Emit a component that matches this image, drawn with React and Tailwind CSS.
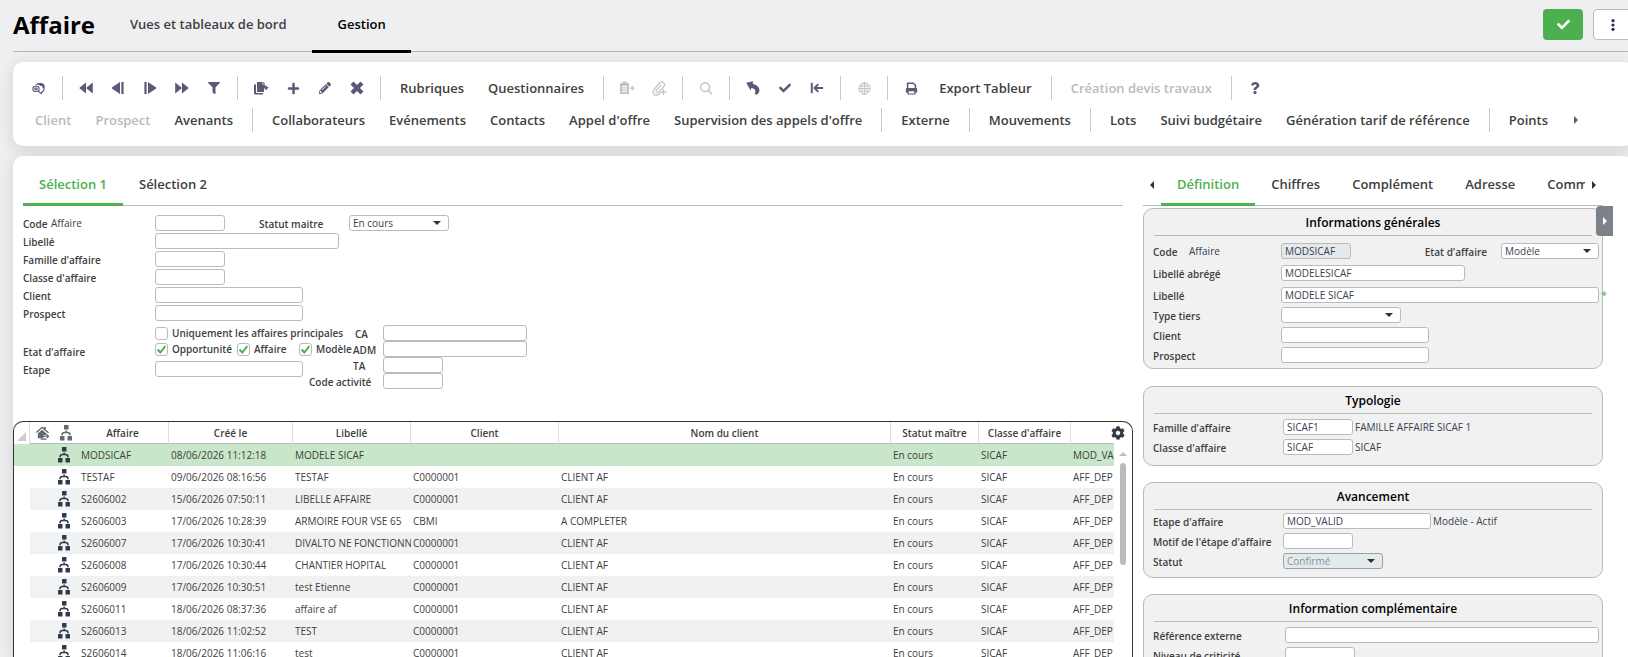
import { FaFilter, FaPlus, FaPencilAlt, FaQuestion, FaCheck, FaCog } from "react-icons/fa";

const Svg = ({ children, className = "w-4 h-4", viewBox = "0 0 16 16" }) => (
    <svg viewBox={viewBox} className={className} fill="currentColor" aria-hidden="true">{children}</svg>
);

const stroke = { fill: "none", stroke: "currentColor", strokeLinecap: "round", strokeLinejoin: "round" };

const icons = {
    globeSearch: (
        <Svg className="w-[14px] h-[14px]">
            <g {...stroke} strokeWidth="1.3">
                <path d="M5 4.200A5.200 5.200 0 1 1 12 12.400" />
                <path d="M7 3.500c1.500 0 1.500 1.500 3 1.500" />
                <rect x="1" y="6" width="7" height="6" rx="2.500" />
                <path d="M3.300 8h2.400v2H3.300zM7.800 12l2.600 2.400 1.200-2" />
            </g>
            <path d="M9.500 2c3 .2 5 2 5.200 5l-2.500 1-.8-2.500-2.400-.5z" />
        </Svg>
    ),
    first: <Svg><path d="M8 2.500v11L1.200 8zM14.800 2.500v11L8 8z" /></Svg>,
    prev: <Svg><path d="M10 2v12L2.200 8.800a1 1 0 0 1 0-1.600zM11.400 2h2.200v12h-2.200z" /></Svg>,
    next: <Svg><path d="M6 2v12l7.800-5.200a1 1 0 0 0 0-1.600zM2.400 2h2.200v12H2.400z" /></Svg>,
    last: <Svg><path d="M8 2.500v11L14.800 8zM1.200 2.500v11L8 8z" /></Svg>,
    filter: <FaFilter className="w-3 h-3" />,
    copy: (
        <Svg>
            <path d="M4 2h5.500v2.500H12V7h-1v5H4z" />
            <path d="M1 4.500h2v8.500h7v1.500H2.200A1.200 1.200 0 0 1 1 13.300zM10.200 1.800 12.200 4h-2z" />
            <path d="M12.300 5.600h1.500v1.500h1.600v1.500h-1.600v1.500h-1.500V8.600h-1.300V7.100h1.300z" />
        </Svg>
    ),
    plus: <FaPlus className="w-[13px] h-[13px]" />,
    pencil: <FaPencilAlt className="w-3 h-3" />,
    times: <Svg className="w-[14px] h-[14px]"><path {...stroke} strokeWidth="4.800" strokeLinecap="butt" d="M2.300 2.300l11.400 11.400M13.700 2.300 2.300 13.700" /></Svg>,
    clipboard: (
        <Svg>
            <path fillRule="evenodd" d="M1 3h2.500V1.500h4V3H10v11H1zM3 6v1.200h5V6zM3 8.400v1.200h5V8.400zM3 10.800V12h5v-1.200z" />
            <path d="M12.600 5.500h1.200v2h2v1.200h-2v2h-1.200v-2h-2V7.500h2z" />
        </Svg>
    ),
    clip: (
        <Svg>
            <path {...stroke} strokeWidth="1.300" d="M9 13.500l-1.500 1A3.400 3.400 0 0 1 2.700 9.800l6.200-7a2.700 2.700 0 0 1 4 3.600l-5.400 6a1.500 1.500 0 0 1-2.200-2l4.600-5M12.500 9.500v5M10 12h5" />
        </Svg>
    ),
    search: <Svg className="w-[14px] h-[14px]"><g {...stroke} strokeWidth="1.700"><circle cx="7" cy="7" r="5" /><path d="M11 11l3.500 3.500" /></g></Svg>,
    undo: <Svg><path d="M1.200 2.800 8.200 1.200 7.600 3.800c3.600 1 6.800 3 6.800 6.400 0 1.800-.8 3.200-2.800 4.600l-2-1c1.800-2.600.6-5.200-3.200-6l-.8 2.600z" /></Svg>,
    check: <FaCheck className="w-3 h-3" />,
    exit: <Svg className="w-[14px] h-[14px]"><path {...stroke} strokeLinecap="butt" strokeLinejoin="miter" strokeWidth="2.200" d="M2 2v12M15 8H5.500M9.500 3.500 5 8l4.500 4.500" /></Svg>,
    globe: (
        <Svg className="w-[13px] h-[13px]">
            <g {...stroke} strokeWidth="1.200">
                <circle cx="8" cy="8" r="7" /><ellipse cx="8" cy="8" rx="3.500" ry="7" />
                <path d="M1 8h14M8 1v14M2 4.800h12M2 11.200h12" />
            </g>
        </Svg>
    ),
    print: (
        <Svg className="w-[13px] h-[13px]">
            <path {...stroke} strokeWidth="1.900" d="M3.200 8V1.500h7l2.600 2.500v4" />
            <path fillRule="evenodd" d="M1 9a1.500 1.500 0 0 1 1.500-1.500h11A1.500 1.500 0 0 1 15 9v4h-2v2.500H3V13H1zM4.600 11.500V14h6.800v-2.500z" />
        </Svg>
    ),
    question: <FaQuestion className="w-3 h-3" />,
};

const SitemapIcon = ({ className }) => (
    <Svg className={`w-3 h-4 ${className}`} viewBox="0 0 12 16">
        <rect x="4" y="0" width="4.500" height="4.500" rx=".5" />
        <path {...stroke} strokeWidth="1.500" d="M2 9.800c0-2 .8-2.300 2.500-2.300h3c1.700 0 2.500.3 2.500 2.300" />
        <path d="M5.400 5.500h1.500V8H5.400z" />
        <rect x="0" y="11" width="4.500" height="4.500" rx=".5" />
        <rect x="7.500" y="11" width="4.500" height="4.500" rx=".5" />
    </Svg>
);

const HomeIcon = () => (
    <Svg className="w-[15px] h-[15px] text-[#5f6a75]">
        <path d="M1 7.500 7.500 1.500l2 1.700V2h2v3l3.500 2.700-1 1.100L7.500 3.500 2 8.600zM7.500 5l5 4.200V11H9v3H3V9z" />
        <path {...stroke} strokeWidth="1.200" d="M8.500 12h6M13 10.500l1.500 1.500L13 13.500M12 15H6.500" />
    </Svg>
);

const Sep = () => <span className="w-px h-6 mx-[7px] bg-[#c8c8d0] shrink-0" />;

const ToolIcon = ({ icon, label, disabled }) => (
    <button
        type="button"
        aria-label={label}
        disabled={disabled}
        className="w-8 h-8 flex items-center justify-center text-[#5b5878] disabled:text-[#c3c3cc] shrink-0">
        {icons[icon]}
    </button>
);

const ToolText = ({ children, disabled }) => (
    <button
        type="button"
        disabled={disabled}
        className="h-8 pt-0.5 px-3 text-[13px] font-semibold text-[#404040] disabled:text-[#bababa] whitespace-nowrap shrink-0">
        {children}
    </button>
);

const firstRow = [
    { icon: "globeSearch", label: "Recherche" }, "|",
    { icon: "first", label: "Premier" }, { icon: "prev", label: "Précédent" }, { icon: "next", label: "Suivant" },
    { icon: "last", label: "Dernier" }, { icon: "filter", label: "Filtrer" }, "|",
    { icon: "copy", label: "Dupliquer" }, { icon: "plus", label: "Ajouter" }, { icon: "pencil", label: "Modifier" },
    { icon: "times", label: "Supprimer" }, "|",
    { text: "Rubriques" }, { text: "Questionnaires" }, "|",
    { icon: "clipboard", label: "Coller", disabled: true }, { icon: "clip", label: "Joindre", disabled: true }, "|",
    { icon: "search", label: "Zoom", disabled: true }, "|",
    { icon: "undo", label: "Annuler" }, { icon: "check", label: "Valider" }, { icon: "exit", label: "Quitter" }, "|",
    { icon: "globe", label: "Web", disabled: true }, "|",
    { icon: "print", label: "Imprimer" }, { text: "Export Tableur" }, "|",
    { text: "Création devis travaux", disabled: true }, "|",
    { icon: "question", label: "Aide" },
];

const secondRow = [
    { text: "Client", disabled: true }, { text: "Prospect", disabled: true }, { text: "Avenants" }, "|",
    { text: "Collaborateurs" }, { text: "Evénements" }, { text: "Contacts" }, { text: "Appel d'offre" },
    { text: "Supervision des appels d'offre" }, "|",
    { text: "Externe" }, "|", { text: "Mouvements" }, "|",
    { text: "Lots" }, { text: "Suivi budgétaire" }, { text: "Génération tarif de référence" }, "|",
    { text: "Points" },
];

const ToolRow = ({ items, children }) => (
    <div className="flex items-center h-8">
        {items.map((item, index) => {
            if (item === "|") return <Sep key={index} />;
            if (item.icon) return <ToolIcon key={index} {...item} />;
            return <ToolText key={index} disabled={item.disabled}>{item.text}</ToolText>;
        })}
        {children}
    </div>
);

const ArrowRight = () => <Svg className="w-1 h-2" viewBox="0 0 4 8"><path d="M0 0l4 4-4 4z" /></Svg>;
const ArrowLeft = () => <Svg className="w-1 h-2" viewBox="0 0 4 8"><path d="M4 0 0 4l4 4z" /></Svg>;

const Tab = ({ active, children }) => (
    <button
        type="button"
        className={`h-[42px] pt-0.5 px-4 text-[13px] font-semibold whitespace-nowrap shrink-0 border-b-3 ${active ? "border-[#4caf50] text-[#4caf50]" : "border-transparent text-[#404040]"}`}>
        {children}
    </button>
);

const Label = ({ htmlFor, className = "", children }) => (
    <label htmlFor={htmlFor} className={`pt-px text-[10px] leading-4 font-semibold text-[#404040] whitespace-nowrap shrink-0 ${className}`}>
        {children}
    </label>
);

const Input = ({ id, className = "", value = "", disabled }) => (
    <input
        id={id}
        type="text"
        defaultValue={value}
        disabled={disabled}
        className={`h-4 px-[3px] text-[10px] leading-[14px] text-[#36424f] bg-white disabled:bg-[#e4e9ec] border border-[#bbb] rounded-[3px] ${className}`}
    />
);

const Select = ({ id, className = "", value, disabled }) => (
    <span className={`relative flex shrink-0 ${className}`}>
        <select
            id={id}
            defaultValue={value}
            disabled={disabled}
            className="appearance-none w-full h-4 px-[3px] text-[10px] leading-[14px] text-[#36424f] bg-white disabled:bg-[#e4e9ec] disabled:text-[#8b9299] disabled:opacity-100 border border-[#bbb] disabled:border-[#98a2ab] rounded-[3px]">
            <option>{value}</option>
        </select>
        <svg viewBox="0 0 8 4" className="absolute right-2 top-1.5 w-2 h-1 fill-[#333] pointer-events-none"><path d="M0 0h8L4 4z" /></svg>
    </span>
);

const Hint = ({ children, className = "" }) => (
    <span className={`text-[10px] leading-4 text-[#36424f] whitespace-nowrap ${className}`}>{children}</span>
);

const Check = ({ id, label, checked, className = "" }) => (
    <span className={`flex items-center h-4 shrink-0 ${className}`}>
        <span className="relative flex w-[13px] h-[13px]">
            <input
                id={id}
                type="checkbox"
                defaultChecked={checked}
                className="peer appearance-none w-[13px] h-[13px] bg-white border border-[#bbb] rounded-[3px]"
            />
            <svg viewBox="0 0 13 13" className="absolute inset-0 hidden peer-checked:block pointer-events-none">
                <path d="M2.500 6.500 5.300 9.500 10.300 3.200" fill="none" stroke="#4caf50" strokeWidth="2" />
            </svg>
        </span>
        <label htmlFor={id} className="ml-1 text-[10px] leading-4 font-semibold text-[#404040] whitespace-nowrap">{label}</label>
    </span>
);

const filters = [
    { id: "f-libelle", label: "Libellé", width: "w-[184px]" },
    { id: "f-famille", label: "Famille d'affaire", width: "w-[70px]" },
    { id: "f-classe", label: "Classe d'affaire", width: "w-[70px]" },
    { id: "f-client", label: "Client", width: "w-[148px]" },
    { id: "f-prospect", label: "Prospect", width: "w-[148px]" },
];

const people = [
    { id: "f-ca", label: "CA", width: "w-[144px]", indent: "pl-[46px]" },
    { id: "f-adm", label: "ADM", width: "w-[144px]", indent: "pl-11" },
    { id: "f-ta", label: "TA", width: "w-[60px]", indent: "pl-11" },
    { id: "f-activite", label: "Code activité", width: "w-[60px]", indent: "" },
];

const FilterForm = () => (
    <form className="px-[10px] pt-[9px] h-[215px] shrink-0">
        <div className="flex h-[18px]">
            <Label htmlFor="f-code" className="w-7">Code</Label>
            <Hint className="w-[104px]">Affaire</Hint>
            <Input id="f-code" className="w-[70px]" />
            <Label htmlFor="f-statut" className="w-[90px] ml-[34px]">Statut maitre</Label>
            <Select id="f-statut" className="w-[100px]" value="En cours" />
        </div>
        {filters.map((field) => (
            <div key={field.id} className="flex h-[18px]">
                <Label htmlFor={field.id} className="w-[132px]">{field.label}</Label>
                <Input id={field.id} className={field.width} />
            </div>
        ))}
        <div className="flex pt-0.5">
            <div className="w-[132px] pt-[18px] flex flex-col gap-px shrink-0">
                <Label>Etat d'affaire</Label>
                <Label htmlFor="f-etape">Etape</Label>
            </div>
            <div className="w-[154px] shrink-0">
                <Check id="c-principales" label="Uniquement les affaires principales" />
                <div className="flex">
                    <Check id="c-opportunite" label="Opportunité" checked className="w-[82px]" />
                    <Check id="c-affaire" label="Affaire" checked className="w-[62px]" />
                    <Check id="c-modele" label="Modèle" checked />
                </div>
                <Input id="f-etape" className="block w-[148px] mt-1" />
            </div>
            <div>
                {people.map((field) => (
                    <div key={field.id} className="flex h-4">
                        <Label htmlFor={field.id} className={`w-[74px] ${field.indent}`}>{field.label}</Label>
                        <Input id={field.id} className={field.width} />
                    </div>
                ))}
            </div>
        </div>
    </form>
);

const rows = [
    ["MODSICAF", "08/06/2026 11:12:18", "MODELE SICAF", "", "", "En cours", "SICAF", "MOD_VALID"],
    ["TESTAF", "09/06/2026 08:16:56", "TESTAF", "C0000001", "CLIENT AF", "En cours", "SICAF", "AFF_DEP"],
    ["S2606002", "15/06/2026 07:50:11", "LIBELLE AFFAIRE", "C0000001", "CLIENT AF", "En cours", "SICAF", "AFF_DEP"],
    ["S2606003", "17/06/2026 10:28:39", "ARMOIRE FOUR VSE 65", "CBMI", "A COMPLETER", "En cours", "SICAF", "AFF_DEP"],
    ["S2606007", "17/06/2026 10:30:41", "DIVALTO NE FONCTIONNE", "C0000001", "CLIENT AF", "En cours", "SICAF", "AFF_DEP"],
    ["S2606008", "17/06/2026 10:30:44", "CHANTIER HOPITAL", "C0000001", "CLIENT AF", "En cours", "SICAF", "AFF_DEP"],
    ["S2606009", "17/06/2026 10:30:51", "test Etienne", "C0000001", "CLIENT AF", "En cours", "SICAF", "AFF_DEP"],
    ["S2606011", "18/06/2026 08:37:36", "affaire af", "C0000001", "CLIENT AF", "En cours", "SICAF", "AFF_DEP"],
    ["S2606013", "18/06/2026 11:02:52", "TEST", "C0000001", "CLIENT AF", "En cours", "SICAF", "AFF_DEP"],
    ["S2606014", "18/06/2026 11:06:16", "test", "C0000001", "CLIENT AF", "En cours", "SICAF", "AFF_DEP"],
];

const headers = ["Affaire", "Créé le", "Libellé", "Client", "Nom du client", "Statut maître", "Classe d'affaire", ""];

const AffaireTable = () => (
    <div className="flex flex-1 min-h-0 overflow-hidden border border-b-0 border-[#333] rounded-t-[10px]">
        <div className="flex-1 min-w-0">
            <table className="w-full table-fixed border-separate border-spacing-0">
                <colgroup>
                    <col className="w-4" />
                    <col className="w-6" />
                    <col className="w-[23px]" />
                    <col className="w-[92px]" />
                    <col className="w-[124px]" />
                    <col className="w-[118px]" />
                    <col className="w-[148px]" />
                    <col />
                    <col className="w-[88px]" />
                    <col className="w-[92px]" />
                    <col className="w-[43px]" />
                </colgroup>
                <thead>
                    <tr className="h-[22px]">
                        <th className="p-0 align-bottom border-r border-[#ddd]">
                            <Svg className="w-[9px] h-[9px] ml-[3px] mb-[3px] text-[#ccc]" viewBox="0 0 9 9"><path d="M9 0v9H0z" /></Svg>
                        </th>
                        <th className="p-0 border-b border-[#bbb]"><span className="flex justify-center"><HomeIcon /></span></th>
                        <th className="p-0 border-b border-[#bbb]"><span className="flex justify-center"><SitemapIcon className="text-[#5f6a75]" /></span></th>
                        {headers.map((header, index) => (
                            <th key={index} className="p-0 text-[10px] leading-4 font-semibold text-[#404040] whitespace-nowrap border-b border-b-[#bbb] border-r border-r-[#ddd] last:border-r-0">
                                {header}
                            </th>
                        ))}
                    </tr>
                </thead>
                <tbody>
                    {rows.map((row, index) => {
                        const bg = index === 0 ? "bg-[#c8e6c9]" : index % 2 === 0 ? "bg-[#f1f1f1]" : "bg-white";
                        const iconBg = index !== 0 && index % 2 === 0 ? "bg-[#f0f2f4]" : bg;
                        return (
                            <tr key={row[0]} className="h-[22px]">
                                <td className={`p-0 ${index === 0 ? bg : ""}`} />
                                <td className={`p-0 ${iconBg}`} />
                                <td className={`p-0 ${iconBg}`}><SitemapIcon className="block ml-1 text-[#2f3b48]" /></td>
                                {row.map((cell, cellIndex) => (
                                    <td key={cellIndex} className={`py-0 pr-0 text-[10px] leading-4 text-[#404040] whitespace-nowrap overflow-hidden ${cellIndex === 0 ? "pl-1" : "pl-0.5"} ${bg}`}>
                                        {cell}
                                    </td>
                                ))}
                            </tr>
                        );
                    })}
                </tbody>
            </table>
        </div>
        <div className="w-[18px] shrink-0 flex flex-col items-center">
            <button type="button" aria-label="Paramètres" className="-ml-2.5 mt-1 text-[#2f3b48]"><FaCog className="w-[14px] h-[14px]" /></button>
            <svg viewBox="0 0 8 4" className="w-2 h-1 mt-3 fill-[#bbb]"><path d="M4 0l4 4H0z" /></svg>
            <div className="w-1.5 h-[102px] mt-[7px] rounded-full bg-[#bbb]" />
        </div>
    </div>
);

const Panel = ({ title, className = "", children }) => (
    <fieldset className={`px-[9px] border border-[#bbb] rounded-[10px] bg-[#f1f1f1] shrink-0 ${className}`}>
        <h2 className="h-[27px] mx-px text-center text-xs leading-[27px] font-semibold text-black border-b border-[#bbb]">{title}</h2>
        {children}
    </fieldset>
);

const DetailPane = () => (
    <section className="relative w-[460px] mr-[30px] shrink-0 flex flex-col">
        <div className="flex items-end h-[50px] border-b border-[#bbb] shrink-0">
            <button type="button" aria-label="Onglets précédents" className="w-[18px] h-10 flex items-center justify-center text-[#333]"><ArrowLeft /></button>
            <div className="flex flex-1 min-w-0 overflow-hidden -mb-px">
                <Tab active>Définition</Tab>
                <Tab>Chiffres</Tab>
                <Tab>Complément</Tab>
                <Tab>Adresse</Tab>
                <Tab>Commentaire</Tab>
            </div>
            <button type="button" aria-label="Onglets suivants" className="w-[18px] h-10 flex items-center justify-center text-[#333]"><ArrowRight /></button>
        </div>
        <Panel title="Informations générales" className="mt-0.5 h-[161px]">
            <div className="flex h-[22px] mt-[7px]">
                <Label htmlFor="d-code" className="w-9">Code</Label>
                <Hint className="w-[92px]">Affaire</Hint>
                <Input id="d-code" className="w-[70px]" value="MODSICAF" disabled />
                <Label htmlFor="d-etat" className="ml-auto mr-3.5">Etat d'affaire</Label>
                <Select id="d-etat" className="w-[98px] -mr-1.5" value="Modèle" />
            </div>
            <div className="flex h-[22px]">
                <Label htmlFor="d-abrege" className="w-32">Libellé abrégé</Label>
                <Input id="d-abrege" className="w-[184px]" value="MODELESICAF" />
            </div>
            <div className="relative flex h-5">
                <Label htmlFor="d-libelle" className="w-32">Libellé</Label>
                <Input id="d-libelle" className="flex-1 -mr-1.5" value="MODELE SICAF" />
                <span className="absolute -right-[14px] top-0 text-[11px] leading-4 text-[#4caf50]">*</span>
            </div>
            <div className="flex h-5">
                <Label htmlFor="d-tiers" className="w-32">Type tiers</Label>
                <Select id="d-tiers" className="w-[120px]" value="" />
            </div>
            <div className="flex h-5">
                <Label htmlFor="d-client" className="w-32">Client</Label>
                <Input id="d-client" className="w-[148px]" />
            </div>
            <div className="flex h-5">
                <Label htmlFor="d-prospect" className="w-32">Prospect</Label>
                <Input id="d-prospect" className="w-[148px]" />
            </div>
        </Panel>
        <Panel title="Typologie" className="mt-[17px] h-20">
            <div className="flex h-5 mt-[5px]">
                <Label htmlFor="d-famille" className="w-[130px]">Famille d'affaire</Label>
                <Input id="d-famille" className="w-[70px]" value="SICAF1" />
                <Hint className="ml-0.5">FAMILLE AFFAIRE SICAF 1</Hint>
            </div>
            <div className="flex h-5">
                <Label htmlFor="d-classe" className="w-[130px]">Classe d'affaire</Label>
                <Input id="d-classe" className="w-[70px]" value="SICAF" />
                <Hint className="ml-0.5">SICAF</Hint>
            </div>
        </Panel>
        <Panel title="Avancement" className="mt-4 h-24">
            <div className="flex h-5 mt-[3px]">
                <Label htmlFor="d-etape" className="w-[130px]">Etape d'affaire</Label>
                <Input id="d-etape" className="w-[148px]" value="MOD_VALID" />
                <Hint className="ml-0.5">Modèle - Actif</Hint>
            </div>
            <div className="flex h-5">
                <Label htmlFor="d-motif" className="w-[130px]">Motif de l'étape d'affaire</Label>
                <Input id="d-motif" className="w-[70px]" />
            </div>
            <div className="flex h-5">
                <Label htmlFor="d-statut" className="w-[130px]">Statut</Label>
                <Select id="d-statut" className="w-[100px]" value="Confirmé" disabled />
            </div>
        </Panel>
        <Panel title="Information complémentaire" className="mt-4 h-24">
            <div className="flex h-5 mt-[5px]">
                <Label htmlFor="d-reference" className="w-[132px]">Référence externe</Label>
                <Input id="d-reference" className="flex-1 -mr-1.5" />
            </div>
            <div className="flex h-5">
                <Label htmlFor="d-criticite" className="w-[132px]">Niveau de criticité</Label>
                <Input id="d-criticite" className="w-[70px]" />
            </div>
        </Panel>
        <button
            type="button"
            aria-label="Replier le volet"
            className="absolute top-[50px] -right-[10px] w-[17px] h-[30px] flex items-center justify-center bg-[#7b828a] text-white rounded-l-[4px]">
            <ArrowRight />
        </button>
    </section>
);

const App = () => {
    return (
        <div className="h-screen overflow-hidden bg-[#efeff1] font-['Open_Sans','Noto_Sans',sans-serif]">
            <div className="h-full ml-[13px] -mr-[5px] flex flex-col">
                <header className="flex h-[52px] border-b border-[#b4b4b4] shrink-0">
                    <h1 className="w-[81px] text-2xl leading-[50px] font-bold text-black">Affaire</h1>
                    <nav className="flex gap-0.5">
                        <a href="#vues" className="ml-3 px-6 text-[13px] leading-[49px] font-semibold text-[#404040]">Vues et tableaux de bord</a>
                        <a href="#gestion" className="h-[53px] px-[25px] text-[13px] leading-[49px] font-semibold text-black border-b-3 border-black">Gestion</a>
                    </nav>
                    <div className="flex gap-[10px] ml-auto mt-[9px]">
                        <button type="button" aria-label="Valider" className="w-10 h-[31px] flex items-center justify-center rounded bg-[#4caf50] text-white">
                            <FaCheck className="w-[13px] h-[13px]" />
                        </button>
                        <button type="button" aria-label="Plus d'actions" className="w-10 h-[31px] flex items-center justify-center rounded bg-white border border-[#bbb] text-[#2b2b45]">
                            <Svg className="w-3 h-3" viewBox="0 0 12 12"><circle cx="6" cy="1.700" r="1.600" /><circle cx="6" cy="6" r="1.600" /><circle cx="6" cy="10.300" r="1.600" /></Svg>
                        </button>
                    </div>
                </header>

                <div className="mt-[10px] px-[10px] pt-[10px] h-[84px] bg-white rounded-[10px] shadow-[0_3px_16px_rgba(0,0,0,0.12)] shrink-0">
                    <ToolRow items={firstRow} />
                    <ToolRow items={secondRow}>
                        <button type="button" aria-label="Suite" className="w-8 h-8 flex items-center justify-center text-[#5b5878]"><ArrowRight /></button>
                    </ToolRow>
                </div>

                <main className="flex flex-1 min-h-0 mt-[10px] gap-[10px] bg-white rounded-t-[10px] shadow-[0_3px_16px_rgba(0,0,0,0.12)] overflow-hidden">
                    <section className="flex-1 min-w-0 flex flex-col">
                        <div className="flex items-end h-[50px] mx-[10px] border-b border-[#bbb] shrink-0">
                            <div className="flex -mb-px">
                                <Tab active>Sélection 1</Tab>
                                <Tab>Sélection 2</Tab>
                            </div>
                        </div>
                        <FilterForm />
                        <AffaireTable />
                    </section>
                    <DetailPane />
                </main>
            </div>
        </div>
    );
};

export default App;
